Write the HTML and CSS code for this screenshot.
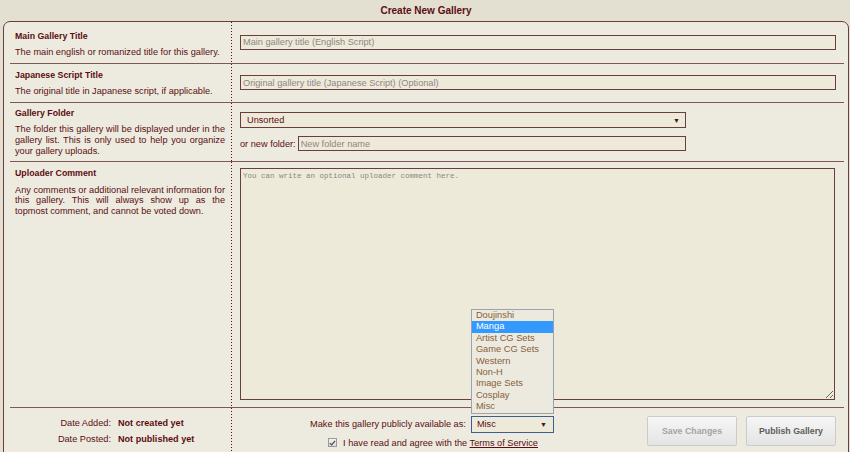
FILE: index.html
```html
<!DOCTYPE html>
<html>
<head>
<meta charset="utf-8">
<title>Create New Gallery</title>
<link rel="stylesheet" href="styles.css">
</head>
<body>
<h1 class="title">Create New Gallery</h1>
<div class="panel">
  <div class="row r1">
    <div class="lab">
      <div class="lt">Main Gallery Title</div>
      <div class="ld">The main english or romanized title for this gallery.</div>
    </div>
    <div class="field">
      <input class="txt" type="text" placeholder="Main gallery title (English Script)">
    </div>
  </div>
  <div class="row r2">
    <div class="lab">
      <div class="lt">Japanese Script Title</div>
      <div class="ld">The original title in Japanese script, if applicable.</div>
    </div>
    <div class="field">
      <input class="txt" type="text" placeholder="Original gallery title (Japanese Script) (Optional)">
    </div>
  </div>
  <div class="row r3">
    <div class="lab">
      <div class="lt">Gallery Folder</div>
      <div class="ld">The folder this gallery will be displayed under in the gallery list. This is only used to help you organize your gallery uploads.</div>
    </div>
    <div class="field">
      <div class="sel big"><span>Unsorted</span><span class="arr">&#9660;</span></div>
      <div class="newf">
        <span>or new folder:</span>
        <input class="txt nf" type="text" placeholder="New folder name">
      </div>
    </div>
  </div>
  <div class="row r4">
    <div class="lab">
      <div class="lt">Uploader Comment</div>
      <div class="ld">Any comments or additional relevant information for this gallery. This will always show up as the topmost comment, and cannot be voted down.</div>
    </div>
    <div class="field">
      <textarea class="ta" placeholder="You can write an optional uploader comment here."></textarea>
    </div>
  </div>
  <div class="row r5">
    <div class="lab">
      <div class="dates">
        <span class="dk">Date Added:</span><span class="dv">Not created yet</span>
        <span class="dk">Date Posted:</span><span class="dv">Not published yet</span>
      </div>
    </div>
    <div class="bottom">
      <div class="pub">
        <div class="publine">
          <span>Make this gallery publicly available as:</span>
          <div class="selwrap">
            <div class="sel small"><span>Misc</span><span class="arr">&#9660;</span></div>
            <ul class="popup">
              <li>Doujinshi</li>
              <li class="hl">Manga</li>
              <li>Artist CG Sets</li>
              <li>Game CG Sets</li>
              <li>Western</li>
              <li>Non-H</li>
              <li>Image Sets</li>
              <li>Cosplay</li>
              <li>Misc</li>
            </ul>
          </div>
        </div>
        <div class="tosline">
          <span class="chk"><svg width="8" height="8" viewBox="0 0 8 8"><path d="M1 4.2 L3 6.2 L7 1.5" fill="none" stroke="#4a4a4a" stroke-width="1.4"/></svg></span>
          <span>I have read and agree with the <a href="#" class="tos">Terms of Service</a></span>
        </div>
      </div>
      <div class="btns">
        <button class="btn dis" type="button">Save Changes</button>
        <button class="btn" type="button">Publish Gallery</button>
      </div>
    </div>
  </div>
</div>
</body>
</html>
```

FILE: styles.css
```css
* { box-sizing: border-box; }
html, body { margin: 0; padding: 0; }
body {
  width: 850px;
  height: 452px;
  overflow: hidden;
  background: #E3E0D1;
  font-family: "Liberation Sans", Arial, sans-serif;
  font-size: 9.2px;
  color: #5C0D11;
}
.title {
  margin: 0;
  height: 21px;
  line-height: 21px;
  font-size: 10px;
  font-weight: bold;
  text-align: center;
  padding-left: 2px;
}
.panel {
  margin-left: 3px;
  width: 846px;
  height: 432px;
  background: #EDEBDF;
  border: 1px solid #6a3e3c;
  border-radius: 7px 7px 0 0;
  padding: 0 4px 0 6px;
}
.row {
  display: flex;
  border-bottom: 1px solid #7f5855;
}
.lab {
  width: 222px;
  flex: none;
  padding: 5px 7px 5px 5px;
  background: linear-gradient(to bottom, #5C0D11 0 1px, transparent 1px 3px) right top / 1px 3px repeat-y;
  display: flex;
  flex-direction: column;
  justify-content: center;
}
.r1 .lab { padding-top: 8px; }
.r3 .lab { padding-top: 4px; padding-bottom: 4px; }
.r4 .lab { justify-content: flex-start; }
.lt {
  font-weight: bold;
  font-size: 8.8px;
  line-height: 12px;
  margin-bottom: 5px;
}
.ld {
  font-size: 9.2px;
  line-height: 10.9px;
  text-align: justify;
}
.r4 .ld { margin-top: 1px; }
.field {
  flex: 1;
  padding: 0 8px;
  display: flex;
  flex-direction: column;
  justify-content: center;
}
.txt {
  display: block;
  width: 100%;
  height: 15px;
  margin: 0;
  border: 1px solid #6a3e3c;
  background: #EDEADA;
  font-family: "Liberation Sans", Arial, sans-serif;
  font-size: 9.2px;
  color: #5C0D11;
  padding: 0 2px;
  outline: none;
}
.txt::placeholder, .ta::placeholder { color: #8f8683; opacity: 1; }
.sel {
  display: flex;
  align-items: center;
  justify-content: space-between;
  border: 1px solid #6a3e3c;
  background: #EDEADA;
  color: #5C0D11;
}
.sel.big {
  width: 446px;
  height: 16px;
  padding: 0 5px 0 6px;
}
.arr { font-size: 7px; line-height: 1; color: #3a1a1a; }
.newf {
  display: flex;
  align-items: center;
  width: 446px;
  margin-top: 8px;
}
.txt.nf { flex: 1; width: auto; margin-left: 2px; }
.r4 .field { padding-top: 6px; padding-bottom: 7px; justify-content: flex-start; }
.ta {
  display: block;
  width: 595px;
  height: 232px;
  margin: 0;
  border: 1px solid #6a3e3c;
  background: #EDEADA;
  font-family: "Liberation Mono", monospace;
  font-size: 7.5px;
  line-height: 10px;
  padding: 2px 2px;
  outline: none;
}
.r5 { border-bottom: none; flex: 1; }
.r5 .lab { justify-content: flex-start; padding-top: 7px; }
.dates {
  display: grid;
  grid-template-columns: 96px auto;
  column-gap: 7px;
  line-height: 16.7px;
}
.dk { text-align: right; }
.dv { font-weight: bold; font-size: 9.1px; }
.bottom {
  flex: 1;
  display: flex;
}
.pub {
  flex: 1;
  padding-top: 8px;
}
.publine {
  display: flex;
  justify-content: center;
  align-items: center;
  height: 17px;
  gap: 5px;
}
.selwrap { position: relative; }
.sel.small {
  width: 83px;
  height: 17px;
  border-color: #3e5f8e;
  padding: 0 6px 0 5px;
}
.popup {
  position: absolute;
  left: 0;
  bottom: calc(100% + 2px);
  width: 83px;
  margin: 0;
  padding: 0;
  list-style: none;
  background: #ECEADE;
  border: 1px solid #9aa3b0;
}
.popup li {
  height: 11.4px;
  line-height: 11.4px;
  padding-left: 4px;
  color: #86603c;
  font-size: 9.3px;
}
.popup li.hl { background: #3399ff; color: #ffffff; }
.tosline {
  display: flex;
  justify-content: center;
  align-items: center;
  margin-top: 3px;
  height: 14px;
  gap: 6px;
  padding-left: 2px;
}
.chk {
  width: 9px;
  height: 9px;
  border: 1px solid #9a9a9a;
  background: linear-gradient(#f3f3f3, #dcdcdc);
  display: flex;
  align-items: center;
  justify-content: center;
}
.chk svg { display: block; }
.tos { color: #5C0D11; text-decoration: underline; }
.btns {
  display: flex;
  gap: 9px;
  padding: 8px 8px 0 15px;
  align-items: flex-start;
}
.btn {
  width: 90px;
  height: 30px;
  margin: 0;
  border: 1px solid #cbcbcb;
  border-radius: 2px;
  background: linear-gradient(#f6f6f6, #e4e4e4);
  font-family: "Liberation Sans", Arial, sans-serif;
  font-size: 8.8px;
  font-weight: bold;
  color: #5d5d5d;
  padding: 0;
}
.btn.dis { color: #a4a4a4; }
```
